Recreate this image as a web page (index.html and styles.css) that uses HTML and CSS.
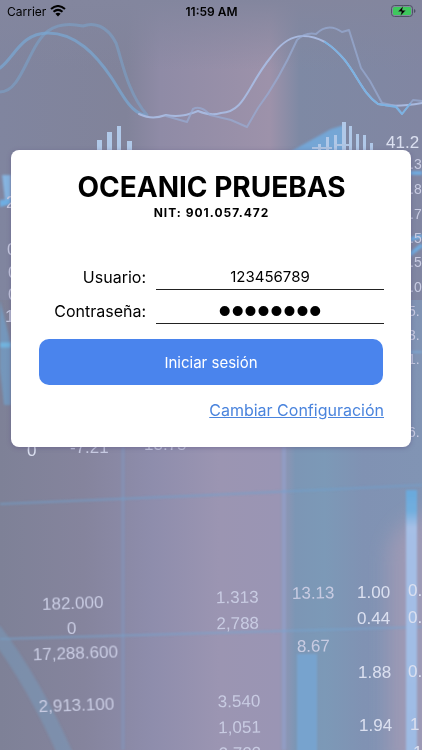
FILE: index.html
```html
<!DOCTYPE html>
<html lang="es">
<head>
    <meta charset="UTF-8">
    <meta name="viewport" content="width=device-width, initial-scale=1.0">
    <title>Iniciar sesión</title>
    <link rel="stylesheet" href="styles.css">
</head>
<body>
    <svg class="background" viewBox="0 0 422 750" preserveAspectRatio="xMidYMid slice" aria-hidden="true">
        <defs>
            <linearGradient id="base" x1="0" x2="1" y1="0" y2="0">
                <stop offset="0" stop-color="#7e8197"/>
                <stop offset="0.2" stop-color="#85849d"/>
                <stop offset="0.36" stop-color="#8e8dac"/>
                <stop offset="0.52" stop-color="#9b95b2"/>
                <stop offset="0.66" stop-color="#9a95b4"/>
                <stop offset="0.7" stop-color="#7c96b5"/>
                <stop offset="0.77" stop-color="#7c99b7"/>
                <stop offset="0.86" stop-color="#8092b3"/>
                <stop offset="1" stop-color="#8194b4"/>
            </linearGradient>
            <linearGradient id="top" x1="0" x2="1" y1="0" y2="0">
                <stop offset="0" stop-color="#80859f"/>
                <stop offset="0.3" stop-color="#81839a"/>
                <stop offset="0.38" stop-color="#8f8ba6"/>
                <stop offset="0.64" stop-color="#9d92aa"/>
                <stop offset="0.71" stop-color="#7e89a4"/>
                <stop offset="1" stop-color="#8186a2"/>
            </linearGradient>
            <linearGradient id="shade" x1="0" x2="0" y1="0" y2="1">
                <stop offset="0" stop-color="#83869e"/>
                <stop offset="1" stop-color="#83869e" stop-opacity="0"/>
            </linearGradient>
            <linearGradient id="bar" x1="0" x2="0" y1="0" y2="1">
                <stop offset="0" stop-color="#69a9dc"/>
                <stop offset="0.08" stop-color="#72aede"/>
                <stop offset="0.14" stop-color="#a6bfe6"/>
                <stop offset="1" stop-color="#9dbbe4"/>
            </linearGradient>
            <filter id="soft" x="-50%" y="-50%" width="200%" height="200%"><feGaussianBlur stdDeviation="10"/></filter>
            <filter id="edge" x="-20%" y="-20%" width="140%" height="140%"><feGaussianBlur stdDeviation="1"/></filter>
        </defs>

        <rect width="422" height="750" fill="url(#base)"/>
        <rect width="422" height="300" fill="url(#top)"/>
        <rect width="422" height="70" fill="url(#shade)"/>
        <path d="M388 770V550Q396 515 440 510V770Z" fill="#a49bb6" opacity="0.8" filter="url(#soft)"/>

        <!-- grid -->
        <g fill="none" stroke="#8098c0" filter="url(#edge)">
            <path d="M123 447V750" stroke-width="3" opacity="0.6"/>
            <path d="M284 447V750" stroke="#91a0ca" stroke-width="4" opacity="0.7"/>
            <path d="M0 504L211 495L422 485" stroke="#70a2cf" stroke-width="2" opacity="0.6"/>
            <path d="M0 639L211 633L422 627" stroke="#77a5d1" stroke-width="2" opacity="0.6"/>
            <path d="M-6 630Q34 682 68 760" stroke="#789bbd" stroke-width="15" opacity="0.5"/>
        </g>

        <!-- candles and bars -->
        <g filter="url(#edge)">
            <rect x="406" y="490" width="11" height="265" fill="url(#bar)"/>
            <rect x="297" y="654" width="20" height="100" fill="#77a6d4" opacity="0.8"/>
            <path d="M288 153L331 129L344 125V153Z" fill="#75a6d5"/>
            <path d="M2 175H11V200H5Z" fill="#86b4e0"/>
            <path d="M0 200L11 199V204L0 207Z" fill="#6eaee3"/>
            <path d="M0 300L11 345V405H4L0 370Z" fill="#709fcb" opacity="0.7"/>
            <path d="M0 345H11" stroke="#72b3dd" stroke-width="5"/>
            <path d="M408 173H422M408 240L422 236M408 256L422 245" stroke="#6fabe0" stroke-width="4"/>
            <path d="M408 352H422" stroke="#7ba6d0" stroke-width="2"/>
        </g>
        <path d="M97 140h5v15h-5zM107 132h5v23h-5zM117 126h4v29h-4zM127 141h5v14h-5z" fill="#b0c9e9"/>
        <path d="M318 144h3v10h-3zM326 137h3v17h-3zM334 135h3v19h-3zM342 122h4v32h-4zM349 126h3v28h-3zM356 134h3v20h-3zM363 135h3v19h-3zM370 143h3v11h-3z" fill="#b0c8e8"/>
        <path d="M312 148H332M334 145H350" stroke="#afc5e3" stroke-width="2"/>

        <!-- price curves -->
        <g fill="none" stroke="#7aa7d1" stroke-linecap="round" stroke-linejoin="round">
            <path d="M0 68C14 58 21 33 48 33C76 33 96 55 111 77C121 92 130 112 144 115" stroke-width="3" opacity="0.75"/>
            <path d="M0 92C22 92 28 46 48 31C60 22 74 24 83 26C93 22 107 25 116 43C122 60 127 92 147 115" stroke-width="3" opacity="0.5"/>
            <path d="M139 114C150 119 157 118 166 115C180 118 190 114 198 111C207 115 215 115 221 113C245 112 247 86 271 57C289 31 308 33 325 42C355 62 357 89 378 104C392 107 405 106 422 103" stroke="#a8b9df" stroke-width="2"/>
            <path d="M166 116L187 122L193 109Q201 105 210 115L231 120L247 127L258 108Q279 80 297 40Q305 32 316 34Q328 22 342 32L349 30L361 68L370 81L382 103L396 106L402 114L413 100L422 101" stroke="#99add4" stroke-width="2" opacity="0.7"/>
            <path d="M325 42C355 62 357 89 378 104L396 107L402 114L410 104" stroke="#7cb2e2" stroke-width="2"/>
        </g>

        <!-- quotes -->
        <g class="quotes">
            <g class="bright">
                <text x="386" y="148">41.2</text>
                <text x="27" y="456">0</text>
            </g>
            <g class="column">
                <text x="410" y="169">.3</text>
                <text x="410" y="194">.8</text>
                <text x="410" y="219">.7</text>
                <text x="410" y="243">.5</text>
                <text x="410" y="267">.5</text>
                <text x="410" y="292">.0</text>
                <text x="408" y="316">5.</text>
                <text x="408" y="340">3.</text>
                <text x="408" y="364">1.</text>
                <text x="408" y="437">6.</text>
            </g>
            <text x="6" y="208">2</text>
            <text x="7" y="255">0</text>
            <text x="8" y="278">0</text>
            <text x="8" y="300">0</text>
            <text x="5" y="322">1</text>
            <text x="70" y="453">-7.21</text>
            <text x="144" y="450">13.75</text>
            <g transform="rotate(-2 71 603)">
                <text x="42" y="609">182.000</text>
                <text x="66" y="634">0</text>
                <text x="31" y="659">17,288.600</text>
                <text x="35" y="711">2,913.100</text>
            </g>
            <g transform="rotate(-1 236 600)">
                <text x="216" y="603">1.313</text>
                <text x="216" y="629">2,788</text>
                <text x="216" y="707">3.540</text>
                <text x="216" y="733">1,051</text>
                <text x="216" y="759">2,722</text>
                <text x="292" y="600">13.13</text>
                <text x="296" y="653">8.67</text>
            </g>
            <g class="bright">
                <text x="357" y="598">1.00</text>
                <text x="357" y="624">0.44</text>
                <text x="358" y="678">1.88</text>
                <text x="359" y="731">1.94</text>
                <text x="408" y="596">0.</text>
                <text x="408" y="623">0.</text>
                <text x="408" y="677">0.</text>
                <text x="410" y="730">1</text>
                <text x="413" y="758">1</text>
            </g>
        </g>
    </svg>

    <header class="status-bar">
        <div class="carrier">
            <span>Carrier</span>
            <svg width="16" height="12" viewBox="0 0 16 12" aria-hidden="true">
                <g fill="none" stroke="#000" stroke-width="2">
                    <path d="M1 4Q8 -2 15 4"/>
                    <path d="M3.5 6.8Q8 3 12.5 6.8"/>
                </g>
                <path d="M5.4 8.7Q8 6.8 10.6 8.7L8 11.5Z"/>
            </svg>
        </div>
        <time>11:59 AM</time>
        <svg class="battery" width="25" height="12" viewBox="0 0 25 12" aria-hidden="true">
            <rect x="0.5" y="0.5" width="21" height="11" rx="3" fill="none" stroke="#4e5064"/>
            <rect x="2" y="2" width="18" height="8" rx="1.5" fill="#3dc85c"/>
            <path d="M23 4Q24.5 4.5 24.5 6T23 8Z" fill="#4e5064"/>
            <path d="M12.3 0.8L6.8 6.7H10.4L9.3 11.2L15 5.2H11.4Z" stroke="#6cbd80" stroke-width="0.5"/>
        </svg>
    </header>

    <main class="login-card">
        <h1>OCEANIC PRUEBAS</h1>
        <p class="nit">NIT: 901.057.472</p>
        <form>
            <div class="field">
                <label for="usuario">Usuario:</label>
                <input type="text" id="usuario" value="123456789">
            </div>
            <div class="field">
                <label for="clave">Contraseña:</label>
                <input type="password" id="clave" value="12345678">
            </div>
            <button type="button">Iniciar sesión</button>
        </form>
        <a href="#configuracion">Cambiar Configuración</a>
    </main>
</body>
</html>
```
FILE: styles.css
```css
* {
    box-sizing: border-box;
}
body {
    margin: 0;
    min-height: 100vh;
    font-family: Inter, "Liberation Sans", sans-serif;
    color: #000;
    background: #85889f;
}
.background {
    position: fixed;
    inset: 0;
    width: 100%;
    height: 100%;
    z-index: -1;
}
.quotes {
    font-family: "Liberation Sans", Arial, sans-serif;
    font-size: 17px;
    fill: #c8cbe2;
}
.quotes .bright {
    fill: #dbe0f0;
}
.quotes .column {
    font-size: 14px;
}
.status-bar {
    display: grid;
    grid-template-columns: 1fr auto 1fr;
    align-items: center;
    height: 22px;
    padding: 0 6px 0 7px;
    font-size: 12px;
}
.carrier {
    display: flex;
    align-items: center;
    gap: 4px;
}
.status-bar time {
    font-weight: 600;
}
.battery {
    justify-self: end;
}
.login-card {
    display: flex;
    flex-direction: column;
    margin: 128px 11px 0;
    padding: 20px 27px 25px 28px;
    background: #fff;
    border-radius: 8px;
    box-shadow: 0 1px 4px rgba(90, 80, 130, 0.5);
}
h1 {
    margin: 0;
    font-size: 28px;
    line-height: 34px;
    font-weight: 700;
    text-align: center;
}
.nit {
    margin: 0 0 35px;
    font-size: 12px;
    line-height: 17px;
    font-weight: 700;
    letter-spacing: 1px;
    text-align: center;
}
.field {
    display: flex;
    align-items: flex-end;
    gap: 10px;
    height: 34px;
}
.field label {
    width: 107px;
    font-size: 16px;
    line-height: 26px;
    text-align: right;
}
.field input {
    flex: 1;
    min-width: 0;
    height: 26px;
    padding: 0;
    border: 0;
    border-bottom: 1px solid #222;
    border-radius: 0;
    outline: none;
    background: none;
    color: #000;
    font-family: inherit;
    font-size: 15px;
    text-align: center;
}
.field input[type="password"] {
    font-family: "Liberation Sans", Arial, sans-serif;
    font-size: 37px;
}
button {
    display: block;
    width: calc(100% - 1px);
    height: 46px;
    margin-top: 15px;
    border: 0;
    border-radius: 10px;
    background: #4a84ed;
    color: #fff;
    font-family: inherit;
    font-size: 15px;
}
a {
    align-self: flex-end;
    margin-top: 13px;
    font-size: 16px;
    line-height: 24px;
    color: #4a84dd;
}
```
